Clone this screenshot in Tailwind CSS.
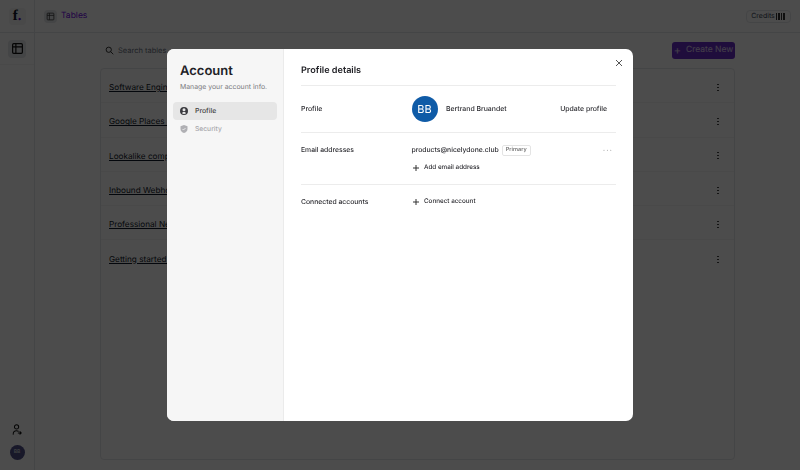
<!DOCTYPE html>
<html lang="en">
<head>
    <meta charset="UTF-8">
    <title>Account</title>
    <script src="https://cdn.jsdelivr.net/npm/@tailwindcss/browser@4"></script>
</head>
<body class="bg-white font-['Inter',sans-serif] antialiased [text-rendering:geometricPrecision]">
    <div class="relative w-[800px] h-[470px] overflow-hidden flex">
        <!-- Sidebar -->
        <aside class="w-[35px] h-full border-r border-gray-200 flex flex-col items-center shrink-0">
            <div class="w-full h-[33px] flex items-center justify-center border-b border-gray-200">
                <div class="w-[17px] h-[17px] bg-gray-100 rounded flex items-center justify-center font-['Liberation_Serif',serif] font-bold text-[15px] text-gray-900">f<span class="text-violet-800">.</span></div>
            </div>
            <div class="w-full h-[32px] flex items-center justify-center border-b border-gray-100">
                <div class="w-[18px] h-[18px] bg-gray-200 rounded flex items-center justify-center">
                    <svg width="13" height="13" viewBox="0 0 24 24" fill="none" stroke="#111" stroke-width="2.2"><rect x="3" y="3" width="18" height="18" rx="2"/><path d="M3 9h18M9 3v18"/></svg>
                </div>
            </div>
            <div class="mt-auto mb-[10px] flex flex-col items-center gap-[10px]">
                <svg width="10" height="11" viewBox="0 0 22 26" fill="none" stroke="#111" stroke-width="2.4" stroke-linecap="round"><circle cx="10" cy="7" r="5"/><path d="M2 24c0-5 3-8 8-8 2 0 3 .4 4 1M14 21h7M18 18l3 3-3 3"/></svg>
                <div class="w-[15px] h-[15px] rounded-full bg-[#50508a] text-[5px] font-semibold text-gray-300 flex items-center justify-center">BB</div>
            </div>
        </aside>

        <!-- Page behind the modal -->
        <main class="flex-1 min-w-0">
            <header class="h-[33px] border-b border-gray-200 flex items-center pl-[9px] pr-[9px]">
                <div class="w-[13px] h-[13px] flex items-center justify-center bg-gray-200 rounded-sm">
                    <svg width="9" height="9" viewBox="0 0 24 24" fill="none" stroke="#333" stroke-width="2"><rect x="3" y="3" width="18" height="18" rx="2"/><path d="M3 9h18M9 3v18"/></svg>
                </div>
                <span class="ml-[4px] text-[8.5px] text-violet-700">Tables</span>
                <div class="ml-auto h-[13px] w-[45px] border border-gray-200 rounded flex items-center justify-center gap-[1px] text-[7px] text-gray-700">Credits <span class="w-[10px] h-[7px] bg-[repeating-linear-gradient(90deg,#333_0,#333_1.500px,transparent_1.500px,transparent_2.500px)]"></span></div>
            </header>
            <div class="pl-[65px] pr-[65px]">
                <div class="h-[35px] flex items-center justify-between">
                    <div class="flex items-center gap-[4px] pl-[5px] text-[7.5px] text-gray-500">
                        <svg width="9" height="9" viewBox="0 0 24 24" fill="none" stroke="#111" stroke-width="2.2"><circle cx="10" cy="10" r="7"/><path d="M15 15l7 7"/></svg>
                        Search tables
                    </div>
                    <div class="w-[63px] h-[17px] bg-[#6a2cc8] rounded-[3px] text-white/80 text-[8.5px] flex items-center justify-center gap-[5px]"><span class="text-[11px] leading-none">+</span>Create New</div>
                </div>
                <div class="h-[392px] border border-gray-200 rounded text-[8.2px] text-gray-900">
                    <div class="h-[34.3px] pl-[8px] pr-[15px] flex items-center justify-between border-b border-gray-100 pt-[2px]"><span class="underline mt-[1px]">Software Engineers</span><span class="w-[2px] h-[8px] bg-[radial-gradient(circle,#444_0.6px,transparent_0.8px)] bg-[length:2px_3px]"></span></div>
                    <div class="h-[34.3px] pl-[8px] pr-[15px] flex items-center justify-between border-b border-gray-100 pt-[2px]"><span class="underline mt-[1px]">Google Places - Cafes</span><span class="w-[2px] h-[8px] bg-[radial-gradient(circle,#444_0.6px,transparent_0.8px)] bg-[length:2px_3px]"></span></div>
                    <div class="h-[34.3px] pl-[8px] pr-[15px] flex items-center justify-between border-b border-gray-100 pt-[2px]"><span class="underline mt-[1px]">Lookalike companies</span><span class="w-[2px] h-[8px] bg-[radial-gradient(circle,#444_0.6px,transparent_0.8px)] bg-[length:2px_3px]"></span></div>
                    <div class="h-[34.3px] pl-[8px] pr-[15px] flex items-center justify-between border-b border-gray-100 pt-[2px]"><span class="underline mt-[1px]">Inbound Webhook</span><span class="w-[2px] h-[8px] bg-[radial-gradient(circle,#444_0.6px,transparent_0.8px)] bg-[length:2px_3px]"></span></div>
                    <div class="h-[34.3px] pl-[8px] pr-[15px] flex items-center justify-between border-b border-gray-100 pt-[2px]"><span class="underline mt-[1px]">Professional Network</span><span class="w-[2px] h-[8px] bg-[radial-gradient(circle,#444_0.6px,transparent_0.8px)] bg-[length:2px_3px]"></span></div>
                    <div class="h-[34.3px] pl-[8px] pr-[15px] flex items-center justify-between pt-[2px]"><span class="underline mt-[1px]">Getting started with</span><span class="w-[2px] h-[8px] bg-[radial-gradient(circle,#444_0.6px,transparent_0.8px)] bg-[length:2px_3px]"></span></div>
                </div>
            </div>
        </main>

        <!-- Overlay -->
        <div class="absolute inset-0 bg-black/70 backdrop-blur-[0.4px]"></div>

        <!-- Modal -->
        <div class="absolute left-[167px] top-[49px] w-[466px] h-[372px] bg-white rounded-[7px] overflow-hidden flex text-[#2b2b30]">
            <div class="w-[117px] bg-[#f6f6f6] border-r border-[#ebebeb] px-[6px] pt-[14px] shrink-0">
                <div class="px-[7px] text-[13px] leading-[17px] font-semibold text-[#212126]">Account</div>
                <div class="px-[7px] mt-[1px] text-[6.900px] leading-[12px] text-[#7a7a80] whitespace-nowrap">Manage your account info.</div>
                <div class="mt-[9px] h-[18px] bg-[#e6e6e6] rounded-[4px] px-[7px] flex items-center gap-[7px] text-[6.900px] font-medium text-[#444]">
                    <svg width="8" height="8" viewBox="0 0 16 16" fill="#3a3a3f"><path fill-rule="evenodd" d="M16 8A8 8 0 1 1 0 8a8 8 0 0 1 16 0zm-5-2.5a3 3 0 1 1-6 0 3 3 0 0 1 6 0zM8 10c-2 0-3.400 1-4 2.300A6 6 0 0 0 8 14a6 6 0 0 0 4-1.700C11.400 11 10 10 8 10z"/></svg>
                    Profile
                </div>
                <div class="h-[18px] px-[7px] flex items-center gap-[7px] text-[6.700px] font-medium text-[#a8a8ac]">
                    <svg width="8" height="8" viewBox="0 0 16 16" fill="#b0b0b4"><path d="M8 0l7 2.500V8c0 4-3 6.800-7 8-4-1.200-7-4-7-8V2.500z"/><path d="M5 8l2 2 4-4" fill="none" stroke="#f6f6f6" stroke-width="1.600"/></svg>
                    Security
                </div>
            </div>
            <div class="relative flex-1 pl-[17px] pr-[17px] pt-[15px]">
                <svg class="absolute right-[10px] top-[10px]" width="8" height="8" viewBox="0 0 8 8" stroke="#555" stroke-width="1"><path d="M1 1l6 6M7 1L1 7"/></svg>
                <div class="text-[9.100px] leading-[13px] font-semibold pb-[8px] border-b border-[#ececec] text-[#212126]">Profile details</div>
                <div class="h-[47px] flex items-center border-b border-[#ececec] text-[6.900px] font-medium">
                    <div class="w-[110.500px]">Profile</div>
                    <div class="w-[26px] h-[26px] rounded-full bg-[#0f5ba7] text-white text-[11px] font-normal flex items-center justify-center">BB</div>
                    <div class="ml-[8.500px]">Bertrand Bruandet</div>
                    <div class="ml-auto mr-[9px]">Update profile</div>
                </div>
                <div class="h-[52px] border-b border-[#ececec] text-[6.800px] font-medium pt-[11px]">
                    <div class="flex items-center h-[12px]">
                        <div class="w-[110.500px]">Email addresses</div>
                        <div>products@nicelydone.club</div>
                        <div class="ml-[3px] h-[11px] px-[3px] border border-[#e4e4e4] rounded-[2px] text-[5.600px] text-[#666] flex items-center">Primary</div>
                        <div class="ml-auto mr-[3px] text-[8px] leading-none tracking-[1px] text-[#aaa]">···</div>
                    </div>
                    <div class="flex items-center h-[12px] mt-[6px] pl-[110.500px] text-[6.300px]">
                        <svg class="ml-[1.500px] mr-[5px]" width="6" height="6" viewBox="0 0 6 6" stroke="#333" stroke-width="1"><path d="M3 0v6M0 3h6"/></svg>Add email address
                    </div>
                </div>
                <div class="flex items-center h-[34px] text-[6.800px] font-medium">
                    <div class="w-[110.500px]">Connected accounts</div>
                    <svg class="ml-[1.500px] mr-[5px]" width="6" height="6" viewBox="0 0 6 6" stroke="#333" stroke-width="1"><path d="M3 0v6M0 3h6"/></svg><span class="text-[6.300px]">Connect account</span>
                </div>
            </div>
        </div>
    </div>
</body>
</html>
